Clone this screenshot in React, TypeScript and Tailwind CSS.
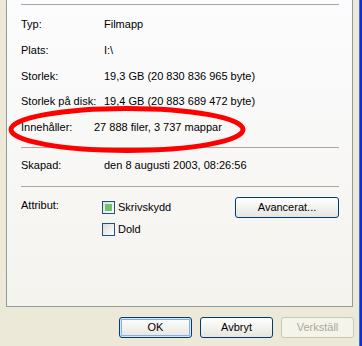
const font = { fontFamily: '"Liberation Sans", Arial, sans-serif' };

const Row = ({ label, value, labelW = "w-[83px]", className = "" }: { label: string; value: string; labelW?: string; className?: string }) => (
  <div className={`flex h-[13px] leading-[13px] whitespace-nowrap ${className}`}>
    <span className={`${labelW} shrink-0`}>{label}</span>
    <span>{value}</span>
  </div>
);

const Separator = ({ className = "" }: { className?: string }) => (
  <div className={`h-px bg-[#ACA899] ${className}`} />
);

const CheckBox = ({ checked, label }: { checked?: boolean; label: string }) => (
  <div className="flex items-center h-[13px] leading-[13px]">
    <div className="w-[13px] h-[13px] border border-[#1C5180] bg-gradient-to-br from-[#DCDBD5] to-white flex items-center justify-center">
      {checked && <div className="w-[7px] h-[7px] bg-[#73C16F]" />}
    </div>
    <span className="ml-[3px]">{label}</span>
  </div>
);

const XpButton = ({ children, primary, disabled, className = "" }: { children: string; primary?: boolean; disabled?: boolean; className?: string }) => (
  <button
    className={`h-[21px] rounded-[3px] border text-[11px] leading-none flex items-center justify-center ${
      disabled
        ? "border-[#C9C7BA] bg-[#F5F4EA] text-[#ACA899]"
        : "border-[#003C74] bg-gradient-to-b from-white to-[#E6E5DE] text-black"
    } ${primary ? "shadow-[inset_0_0_0_1px_#CEE7FF,inset_0_0_0_2px_#89ADE4]" : ""} ${className}`}
  >
    {children}
  </button>
);

export default function App() {
  return (
    <div className="w-[362px] h-[346px] bg-[#ECE9D8] flex overflow-hidden text-[11px] text-black" style={font}>
      <div className="w-[359px] flex flex-col">
        <div className="relative ml-[6px] w-[347px] h-[307px] border-x border-b border-[#919B9C] bg-gradient-to-b from-[#FCFCFE] to-[#F4F3EE] pl-[14px] pr-[13px] flex flex-col">
          <Separator className="mt-[4px]" />
          <Row className="mt-[13px]" label="Typ:" value="Filmapp" />
          <Row className="mt-[13px]" label="Plats:" value="I:\" />
          <Row className="mt-[13px]" label="Storlek:" value="19,3 GB (20 830 836 965 byte)" />
          <Row className="mt-[12px]" label="Storlek på disk:" value="19,4 GB (20 883 689 472 byte)" />
          <Row className="mt-[13px]" labelW="w-[73px]" label="Innehåller:" value="27 888 filer, 3 737 mappar" />
          <Separator className="mt-[13px]" />
          <Row className="mt-[11px]" label="Skapad:" value="den 8 augusti 2003, 08:26:56" />
          <Separator className="mt-[14px]" />

          <div className="mt-[10px] flex">
            <span className="w-[81px] mt-[2px] h-[13px] leading-[13px]">Attribut:</span>
            <div className="mt-[4px] flex flex-col gap-[9px]">
              <CheckBox checked label="Skrivskydd" />
              <CheckBox label="Dold" />
            </div>
            <XpButton className="ml-auto w-[104px]">Avancerat...</XpButton>
          </div>

          {/* red marker round "Innehåller" */}
          <svg className="absolute left-[1px] top-[106px]" width="240" height="48" viewBox="0 0 240 48">
            <ellipse cx="119" cy="23.5" rx="116" ry="21" fill="none" stroke="#FF0000" strokeWidth="5" />
          </svg>
        </div>

        <div className="mt-[10px] flex justify-end gap-[8px] pr-[5px]">
          <XpButton primary className="w-[73px]">OK</XpButton>
          <XpButton className="w-[73px]">Avbryt</XpButton>
          <XpButton disabled className="w-[73px]">Verkställ</XpButton>
        </div>
      </div>
      <div className="w-px bg-[#3A6FE8]" />
      <div className="w-[2px] bg-[#0831D9]" />
    </div>
  );
}
